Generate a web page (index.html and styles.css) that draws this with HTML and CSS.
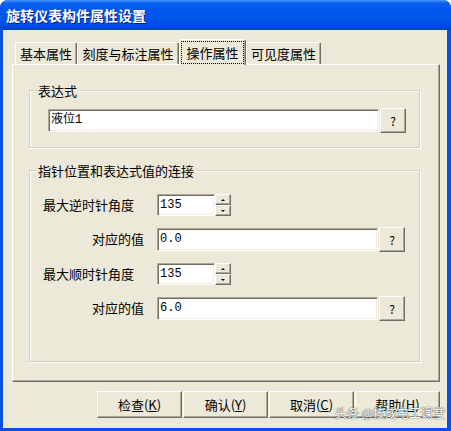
FILE: index.html
```html
<!DOCTYPE html>
<html lang="zh">
<head>
    <meta charset="UTF-8">
    <title>旋转仪表构件属性设置</title>
    <link rel="stylesheet" href="styles.css">
</head>
<body>
    <div class="window">
        <div class="titlebar"><span class="title">旋转仪表构件属性设置</span></div>
        <div class="client">
            <div class="tabs">
                <div class="tab t1">基本属性</div>
                <div class="tab t2">刻度与标注属性</div>
                <div class="tab t3 active"><span class="focus">操作属性</span></div>
                <div class="tab t4">可见度属性</div>
            </div>
            <div class="page">
                <fieldset class="group g1">
                    <legend>表达式</legend>
                    <div class="field-row">
                        <div class="edit grow">液位1</div>
                        <button class="btn q">?</button>
                    </div>
                </fieldset>
                <fieldset class="group g2">
                    <legend>指针位置和表达式值的连接</legend>
                    <div class="rows">
                        <div class="row">
                            <span class="lbl">最大逆时针角度</span>
                            <div class="spin">
                                <div class="edit num">135</div>
                                <div class="spin-btns">
                                    <span class="sb"><i class="up"></i></span>
                                    <span class="sb"><i class="down"></i></span>
                                </div>
                            </div>
                        </div>
                        <div class="row">
                            <span class="lbl right">对应的值</span>
                            <div class="edit long">0.0</div>
                            <button class="btn q">?</button>
                        </div>
                        <div class="row">
                            <span class="lbl">最大顺时针角度</span>
                            <div class="spin">
                                <div class="edit num">135</div>
                                <div class="spin-btns">
                                    <span class="sb"><i class="up"></i></span>
                                    <span class="sb"><i class="down"></i></span>
                                </div>
                            </div>
                        </div>
                        <div class="row">
                            <span class="lbl right">对应的值</span>
                            <div class="edit long">6.0</div>
                            <button class="btn q">?</button>
                        </div>
                    </div>
                </fieldset>
            </div>
            <div class="actions">
                <button class="btn cmd">检查(<u>K</u>)</button>
                <button class="btn cmd">确认(<u>Y</u>)</button>
                <button class="btn cmd">取消(<u>C</u>)</button>
                <button class="btn cmd">帮助(<u>H</u>)</button>
            </div>
            <div class="watermark">头条 @技成电工课堂</div>
        </div>
    </div>
</body>
</html>
```
FILE: styles.css
```css
body {
    margin: 0;
    background: #fff;
}
.window {
    width: 451px;
    height: 431px;
    display: flex;
    flex-direction: column;
    background: #0b50dc;
    border-radius: 8px 8px 0 0;
    overflow: hidden;
    font-family: "Noto Sans CJK SC", sans-serif;
    font-size: 13px;
    color: #000;
}
.titlebar {
    flex: none;
    height: 30px;
    display: flex;
    align-items: center;
    padding-left: 6px;
    background: linear-gradient(#4a96ff 0, #0c62f0 3px, #0059ee 8px, #0055ea 20px, #0049d8 27px, #003fc6 30px);
}
.title {
    color: #fff;
    font-weight: bold;
    font-size: 14px;
    text-shadow: 1px 1px #0a1883;
}
.client {
    flex: 1;
    position: relative;
    margin: 0 4px 3px 3px;
    padding: 8px 7px 0 9px;
    background: #ece9d8;
    display: flex;
    flex-direction: column;
}
.tabs {
    display: flex;
    align-items: flex-end;
    height: 26px;
    padding-left: 3px;
}
.tab {
    box-sizing: border-box;
    height: 22px;
    display: flex;
    align-items: center;
    justify-content: center;
    border: 1px solid;
    border-color: #fff #716f64 transparent #fff;
    border-bottom: none;
    border-radius: 2px 2px 0 0;
    box-shadow: inset -1px 0 #aca899;
    background: #ece9d8;
}
.t1 { width: 62px; }
.t2 { width: 102px; }
.t3 { width: 67px; }
.t4 { width: 75px; }
.tab.active {
    position: relative;
    z-index: 1;
    height: 26px;
    margin-bottom: -1px;
    padding: 1px 1px 1px 1px;
    align-items: stretch;
}
.focus {
    flex: 1;
    display: flex;
    align-items: center;
    justify-content: center;
    border: 1px dotted #000;
}
.page {
    box-sizing: border-box;
    height: 318px;
    border: 1px solid;
    border-color: #fff #716f64 #716f64 #fff;
    box-shadow: inset -1px -1px #aca899;
    padding: 18px 19px 19px 16px;
    display: flex;
    flex-direction: column;
}
.group {
    margin: 0;
    padding: 0 6px;
    min-width: 0;
    border: 1px solid #d0d0bf;
    box-shadow: inset 1px 1px #fff, 1px 1px #fff;
}
.group legend {
    padding: 0 2px;
    line-height: 15px;
    background: #ece9d8;
}
.field-row {
    display: flex;
    align-items: center;
    gap: 1px;
    padding: 10px 7px 14px 12px;
}
.g2 {
    flex: 1;
    margin-top: 15px;
}
.rows {
    display: flex;
    flex-direction: column;
    gap: 11px;
    padding: 16px 7px 0 7px;
}
.row {
    display: flex;
    align-items: center;
    gap: 1px;
}
.lbl {
    flex: none;
    width: 114px;
    margin-right: -1px;
    padding-bottom: 2px;
}
.lbl.right {
    box-sizing: border-box;
    text-align: right;
    padding-right: 13px;
}
.edit {
    box-sizing: border-box;
    height: 23px;
    display: flex;
    align-items: flex-start;
    padding: 3px 2px 0 2px;
    background: #fff;
    border: 1px solid;
    border-color: #aca899 #fff #fff #aca899;
    box-shadow: inset 1px 1px #716f64, inset -1px -1px #f1efe2;
    font-family: "Liberation Mono", "Noto Sans CJK SC", monospace;
    font-size: 12px;
    line-height: 14px;
}
.grow { flex: 1; }
.long { width: 221px; }
.spin {
    display: flex;
    height: 22px;
}
.spin .edit {
    width: 58px;
    height: 22px;
}
.spin-btns {
    width: 16px;
    display: flex;
    flex-direction: column;
}
.sb {
    flex: 1;
    display: flex;
    align-items: center;
    justify-content: center;
    box-sizing: border-box;
    border: 1px solid;
    border-color: #fff #716f64 #716f64 #fff;
    box-shadow: inset -1px -1px #aca899;
    background: #ece9d8;
}
.sb i {
    width: 0;
    height: 0;
    border-left: 2px solid transparent;
    border-right: 2px solid transparent;
}
.sb .up { border-bottom: 2px solid #000; }
.sb .down { border-top: 2px solid #000; }
.btn {
    box-sizing: border-box;
    margin: 0;
    padding: 0;
    border: 1px solid;
    border-color: #fff #716f64 #716f64 #fff;
    box-shadow: inset -1px -1px #aca899;
    background: #ece9d8;
    font-family: "Noto Sans CJK SC", sans-serif;
    color: #000;
}
.q {
    flex: none;
    width: 26px;
    height: 25px;
    font-size: 12px;
}
.actions {
    display: flex;
    justify-content: flex-end;
    gap: 1px;
    margin-top: 9px;
}
.cmd {
    width: 85px;
    height: 27px;
    font-size: 13px;
}
.watermark {
    position: absolute;
    left: 332px;
    top: 374px;
    font-size: 12px;
    color: #fff;
    text-shadow: 0 0 1px #444, 0 0 1px #444;
    white-space: nowrap;
}
```
